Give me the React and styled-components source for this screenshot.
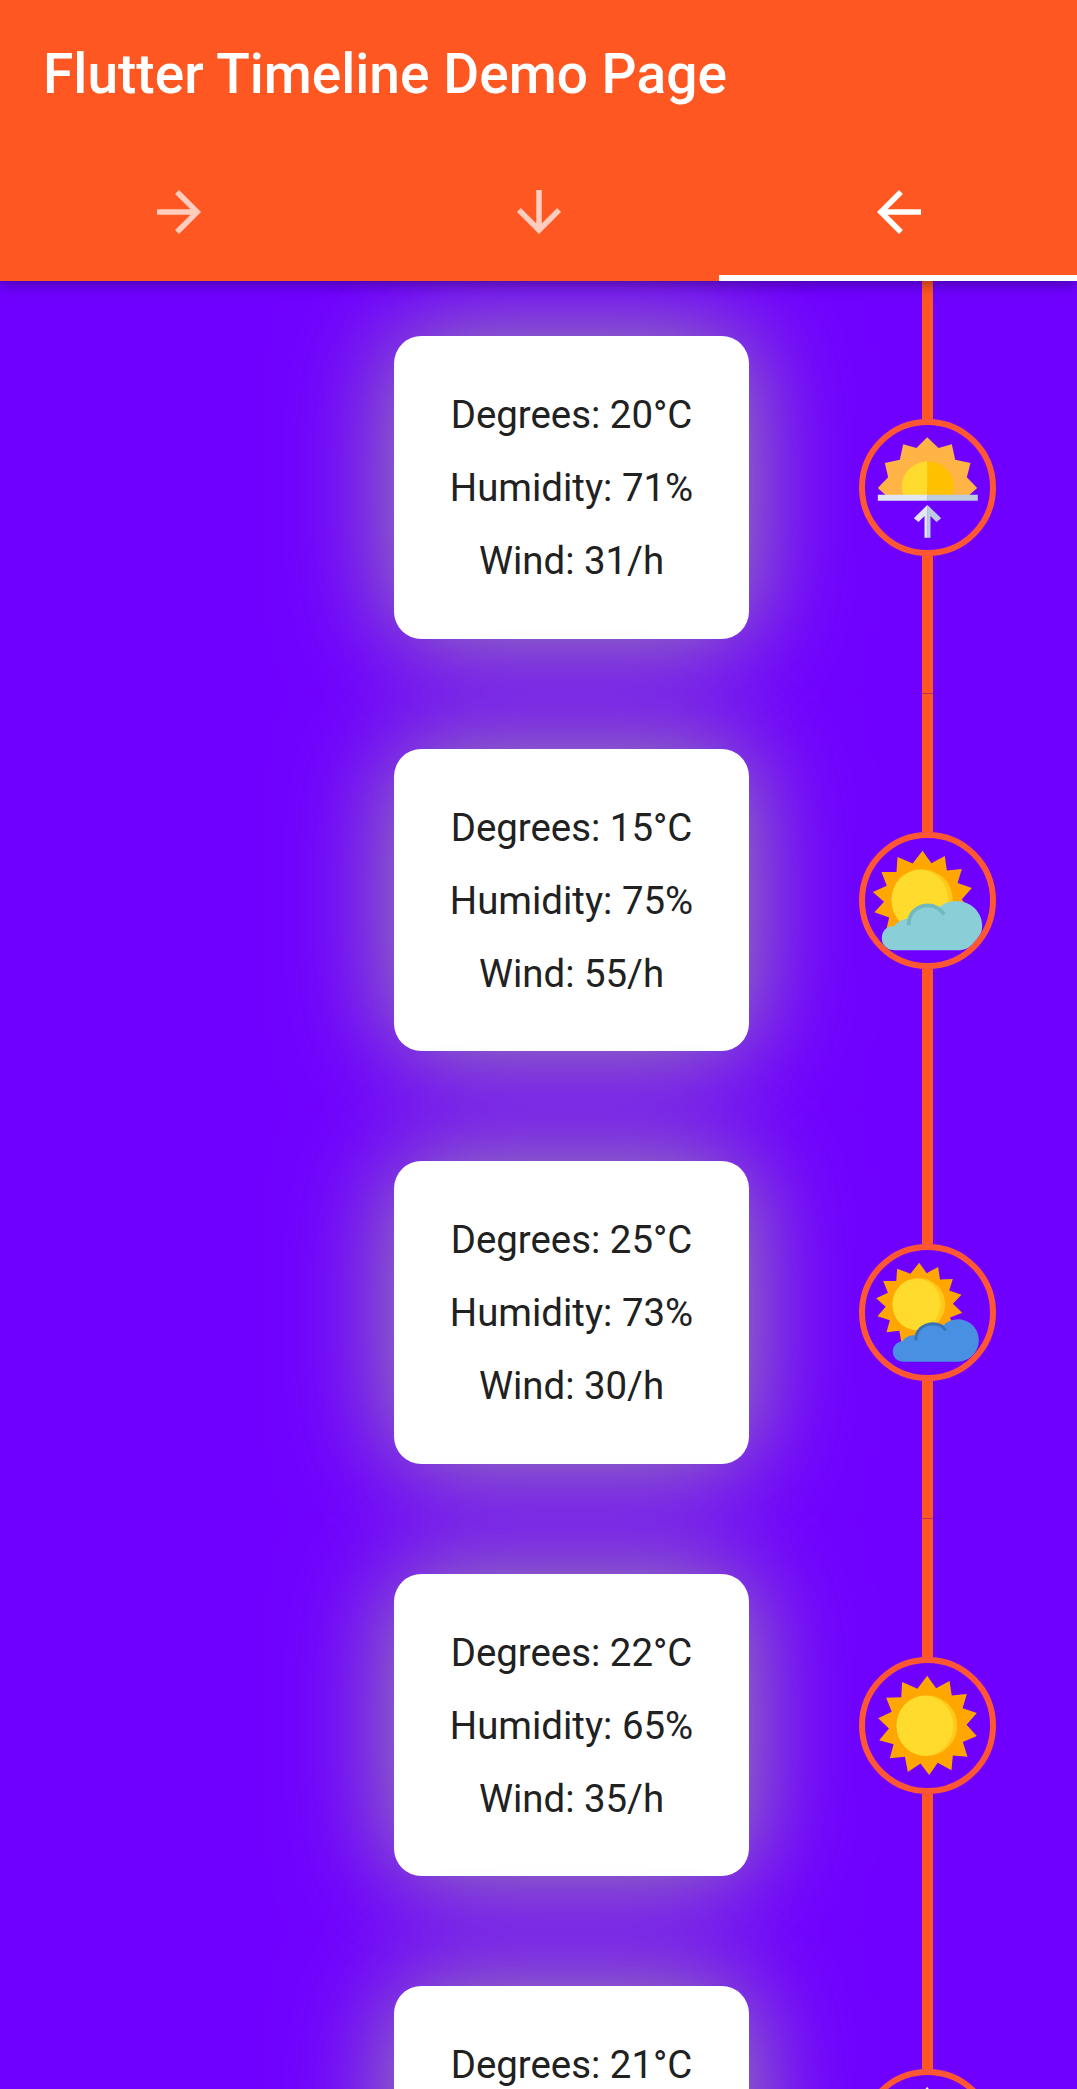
import React from "react";
import styled, { createGlobalStyle } from "styled-components";

const GlobalStyle = createGlobalStyle`
  html, body { margin: 0; padding: 0; }
  body { background: #6f00ff; font-family: Roboto, "Liberation Sans", sans-serif; }
`;

const Screen = styled.div`
  display: flex;
  flex-direction: column;
  width: 1077px;
  height: 2089px;
  overflow: hidden;
  background: #6f00ff;
`;

const AppBar = styled.header`
  position: relative;
  z-index: 1;
  flex: none;
  display: flex;
  flex-direction: column;
  height: 281px;
  background: #ff5722;
  box-shadow: 0 4px 11px -2px rgba(0, 0, 0, 0.2), 0 3px 14px rgba(0, 0, 0, 0.12),
    0 2px 20px rgba(0, 0, 0, 0.1);
`;

const Title = styled.h1`
  box-sizing: border-box;
  margin: 0;
  height: 149px;
  padding: 0 43px;
  line-height: 149px;
  font-size: 55.1px;
  font-weight: 500;
  color: #fff;
  white-space: nowrap;
`;

const Tabs = styled.nav`
  display: grid;
  grid-template-columns: 358px 361px 360px;
  height: 132px;
`;

const Tab = styled.div`
  box-sizing: border-box;
  display: flex;
  align-items: center;
  justify-content: center;
  border-bottom: 6px solid ${(p) => (p.$active ? "#fff" : "transparent")};
  color: ${(p) => (p.$active ? "#fff" : "rgba(255, 255, 255, 0.7)")};
`;

const TabIcon = styled.svg`
  width: 66px;
  height: 66px;
  fill: currentColor;
`;

const Timeline = styled.main`
  flex: none;
  display: flex;
  flex-direction: column;
  padding-top: 0.3px;
`;

const Row = styled.section`
  display: grid;
  grid-template-columns: 749px 110px 137px;
  height: 412.5px;
`;

const CardSlot = styled.div`
  display: flex;
  align-items: center;
  justify-content: flex-end;
`;

const Card = styled.div`
  box-sizing: border-box;
  display: flex;
  flex-direction: column;
  align-items: center;
  width: 355px;
  height: 302.5px;
  padding-top: 41.75px;
  border-radius: 27.5px;
  background: #fff;
  box-shadow: 0 0 108px #9e9e9e;
`;

const Reading = styled.p`
  margin: 0;
  height: 73px;
  line-height: 73px;
  font-size: 38.4px;
  color: #212121;
  white-space: nowrap;
`;

const Rail = styled.div`
  grid-column: 3;
  display: flex;
  flex-direction: column;
  align-items: center;
`;

const Line = styled.div`
  box-sizing: border-box;
  flex: 1;
  width: 11px;
  background: #ff5722;
  border-bottom: ${(p) => (p.$seam ? "1px solid #b8305f" : "none")};
`;

const Indicator = styled.div`
  box-sizing: border-box;
  flex: none;
  width: 137px;
  height: 137px;
  border: 6px solid #ff5733;
  border-radius: 50%;
  overflow: hidden;
`;

const Drawing = styled.svg`
  display: block;
  width: 100%;
  height: 100%;
`;

const ARROWS = {
  right: "M12 4l-1.41 1.41L16.17 11H4v2h12.17l-5.58 5.59L12 20l8-8z",
  down: "M20 12l-1.41-1.41L13 16.17V4h-2v12.17l-5.58-5.59L4 12l8 8 8-8z",
  left: "M20 11H7.83l5.59-5.59L12 4l-8 8 8 8 1.41-1.41L7.83 13H20v-2z",
};

// Star outline: every tip is followed by a valley pulled toward the centre.
const rays = (tips, [cx, cy], pull = 0.79) =>
  tips
    .flatMap(([x, y], i) => {
      const [nx, ny] = tips[(i + 1) % tips.length];
      const mx = (x + nx) / 2;
      const my = (y + ny) / 2;
      return [`${x},${y}`, `${cx + (mx - cx) * pull},${cy + (my - cy) * pull}`];
    })
    .join(" ");

const Sunrise = () => (
  <Drawing viewBox="75.5 73 375 375">
    <path
      fill="#ffb445"
      d="M262 110L296 142L336 131L346 177L392 187L381 230L412 262L385 286H140L114 262L145 230L135 187L180 177L190 131L230 142Z"
    />
    <path fill="#ffdb2d" d="M263 182A77 77 0 0 0 190 284H263Z" />
    <path fill="#ffc000" d="M262 182A77 77 0 0 1 338 284H262Z" />
    <path fill="#e2e6f2" d="M114 282H263V300H114Z" />
    <path fill="#bccbe0" d="M262 282H414V300H262Z" />
    <path fill="#e2e6f2" d="M263 312L222 353L236 364L254 346V411H263Z" />
    <path fill="#bccbe0" d="M262 312L304 353L290 364L272 346V411H262Z" />
  </Drawing>
);

const HAZY_TIPS = [
  [248, 105], [315, 121], [366, 160], [396, 217], [397, 285], [369, 345], [320, 388],
  [254, 403], [190, 390], [138, 348], [104, 290], [99, 229], [125, 169], [173, 124],
];

const SunHazyCloud = () => (
  <Drawing viewBox="75.5 67 375 375">
    <polygon fill="#ffa700" points={rays(HAZY_TIPS, [249, 253])} />
    <circle cx="247" cy="253" r="92" fill="#ffc81c" />
    <ellipse cx="240" cy="253" rx="85" ry="91" fill="#ffdb2d" />
    <path
      fill="#8acfd8"
      d="M167 404C140 404 126 388 126 367C126 343 143 331 164 331C174 317 190 309 207 309C220 279 240 266 264 265C278 265 289 269 299 274C312 262 330 256 350 256C393 256 427 290 427 329C427 374 393 404 354 404Z"
    />
    <path d="M207 329C205 294 230 270 263 269C284 269 301 279 313 296" fill="none" stroke="#6fb9bf" strokeWidth="11" />
  </Drawing>
);

const CLOUDY_TIPS = [
  [238, 96], [295, 109], [339, 145], [365, 192], [367, 246], [344, 296], [300, 332],
  [243, 346], [185, 337], [140, 305], [113, 257], [109, 203], [130, 151], [172, 114],
];

const SunBlueCloud = () => (
  <Drawing viewBox="75.5 58 375 375">
    <polygon fill="#ffa700" points={rays(CLOUDY_TIPS, [238, 221])} />
    <circle cx="237" cy="221" r="79" fill="#ffc81c" />
    <ellipse cx="230" cy="221" rx="72" ry="77" fill="#ffdb2d" />
    <path
      fill="#4a90e2"
      d="M190 393C170 393 159 379 159 362C159 345 173 333 188 332C197 318 211 313 228 314C235 291 254 277 278 276C291 276 302 279 311 284C322 272 337 266 354 266C389 266 417 294 417 328C417 361 392 393 354 393Z"
    />
    <path d="M228 329C227 299 250 280 279 279C296 279 309 286 318 299" fill="none" stroke="#3a74b5" strokeWidth="9" />
  </Drawing>
);

const SUN_TIPS = [
  [262, 105], [329, 121], [381, 160], [411, 217], [411, 286], [383, 348], [335, 389],
  [268, 403], [204, 394], [150, 353], [118, 299], [115, 233], [139, 171], [187, 124],
];

const Sun = () => (
  <Drawing viewBox="75.5 67 375 375">
    <polygon fill="#ffa700" points={rays(SUN_TIPS, [264, 255])} />
    <circle cx="261" cy="255" r="91" fill="#ffc81c" />
    <ellipse cx="255" cy="255" rx="85" ry="90" fill="#ffdb2d" />
  </Drawing>
);

const PaleSun = () => (
  <Drawing viewBox="75.5 70 375 375">
    <polygon fill="#e9edf5" points={rays(SUN_TIPS, [264, 255])} />
  </Drawing>
);

const TABS = ["right", "down", "left"];

const FORECAST = [
  { readings: ["Degrees: 20°C", "Humidity: 71%", "Wind: 31/h"], Icon: Sunrise, seam: true },
  { readings: ["Degrees: 15°C", "Humidity: 75%", "Wind: 55/h"], Icon: SunHazyCloud },
  { readings: ["Degrees: 25°C", "Humidity: 73%", "Wind: 30/h"], Icon: SunBlueCloud, seam: true },
  { readings: ["Degrees: 22°C", "Humidity: 65%", "Wind: 35/h"], Icon: Sun },
  { readings: ["Degrees: 21°C"], Icon: PaleSun },
];

export default function App() {
  return (
    <Screen>
      <GlobalStyle />
      <AppBar>
        <Title>Flutter Timeline Demo Page</Title>
        <Tabs>
          {TABS.map((dir) => (
            <Tab key={dir} $active={dir === "left"}>
              <TabIcon viewBox="0 0 24 24">
                <path d={ARROWS[dir]} />
              </TabIcon>
            </Tab>
          ))}
        </Tabs>
      </AppBar>
      <Timeline>
        {FORECAST.map(({ readings, Icon, seam }) => (
          <Row key={readings[0]}>
            <CardSlot>
              <Card>
                {readings.map((text) => (
                  <Reading key={text}>{text}</Reading>
                ))}
              </Card>
            </CardSlot>
            <Rail>
              <Line />
              <Indicator>
                <Icon />
              </Indicator>
              <Line $seam={seam} />
            </Rail>
          </Row>
        ))}
      </Timeline>
    </Screen>
  );
}
